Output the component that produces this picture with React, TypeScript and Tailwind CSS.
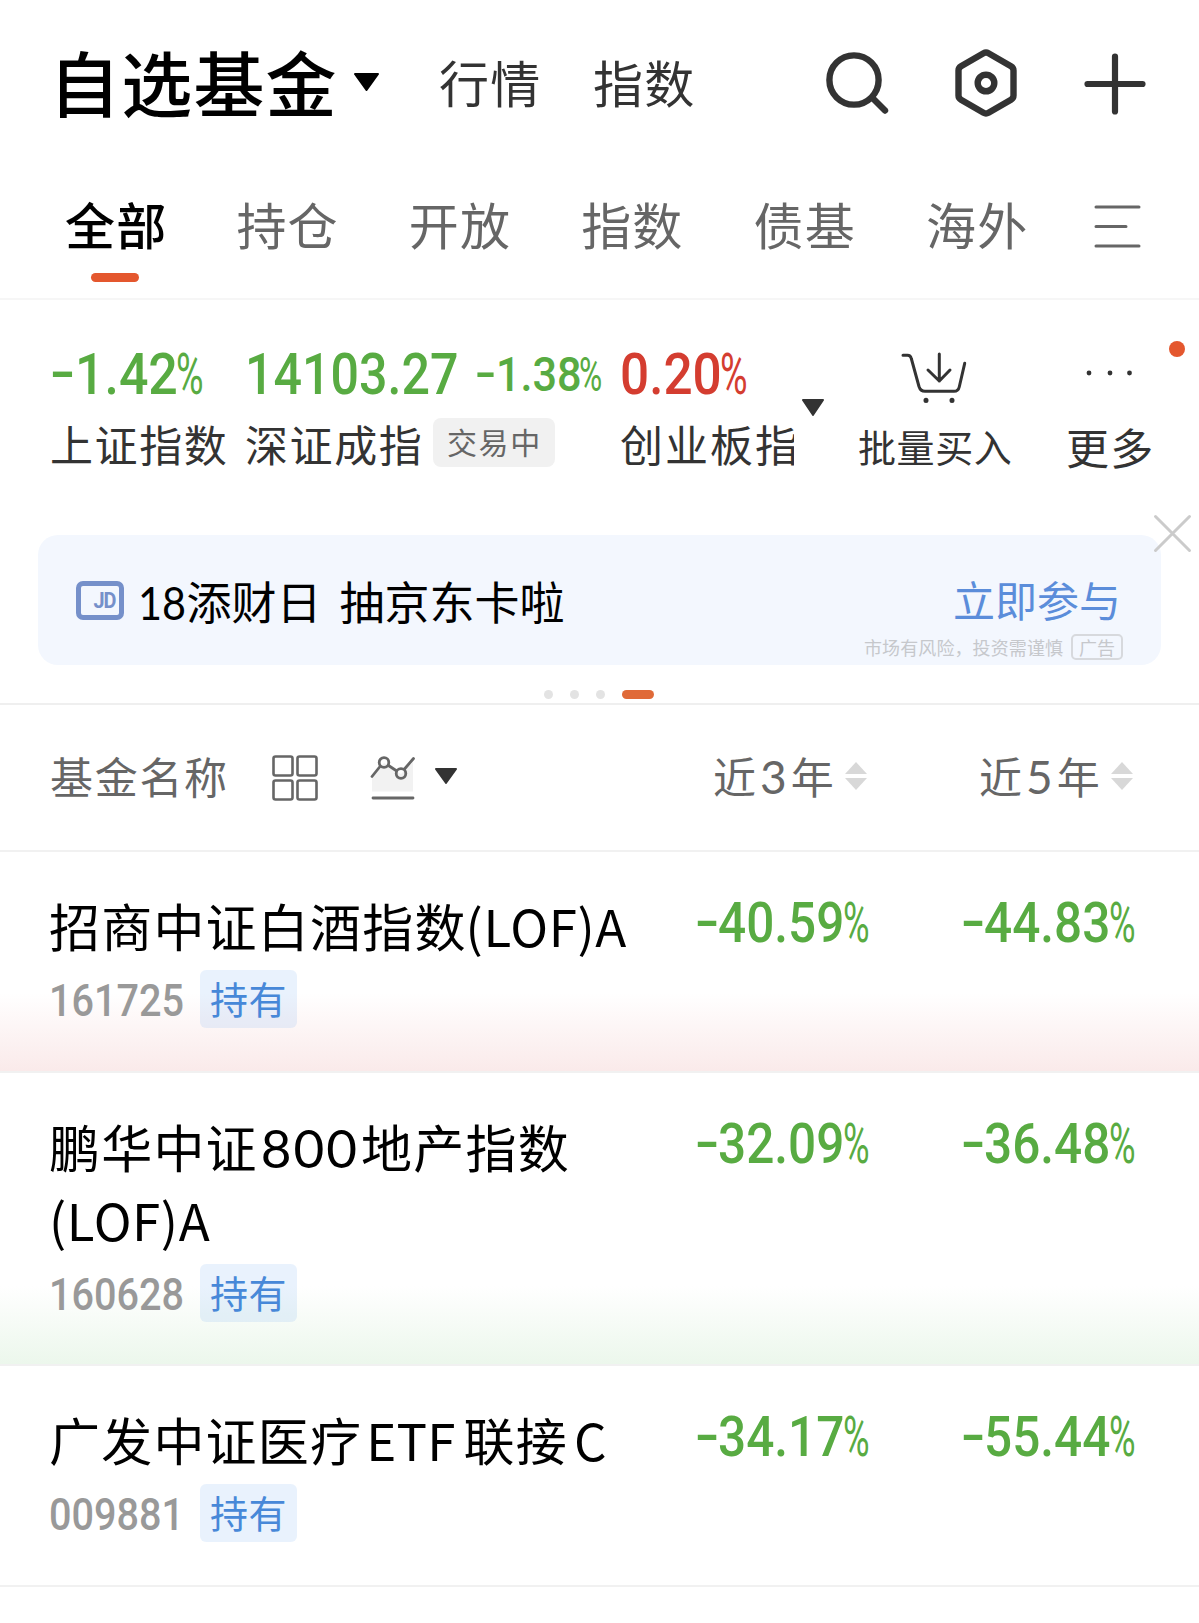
import type { ReactNode } from "react";

const GREEN = "text-[#58ab42]";
const RED = "text-[#d43d30]";

const TABS = ["全部", "持仓", "开放", "指数", "债基", "海外"];

const FUNDS = [
  {
    name: (
      <div>
        招商中证白酒指数<span className="-ml-px tracking-[0.6px]">(LOF)A</span>
      </div>
    ),
    code: "161725",
    year3: "40.59",
    year5: "44.83",
    glow: "from-[#faeaea]",
  },
  {
    name: (
      <>
        <div>
          鹏华中证<span className="mr-[2px] ml-[3px] font-[Lato] text-[53px] leading-none tracking-[2px]">800</span>地产指数
        </div>
        <div className="tracking-[0.6px]">(LOF)A</div>
      </>
    ),
    code: "160628",
    year3: "32.09",
    year5: "36.48",
    glow: "from-[#ecf7ec]",
  },
  {
    name: (
      <div>
        广发中证医疗<span className="mr-[8px] ml-[4px] tracking-[0.2px]">ETF</span>联接<span className="ml-[6px]">C</span>
      </div>
    ),
    code: "009881",
    year3: "34.17",
    year5: "55.44",
    glow: "",
  },
];

// Narrow figures: Roboto squeezed horizontally, with a thin percent sign
function Minus({ className }: { className: string }) {
  return <span className={`inline-block shrink-0 origin-left ${className}`}>-</span>;
}

function Squeeze({ className, children }: { className: string; children: ReactNode }) {
  return <span className={`inline-block shrink-0 origin-left whitespace-nowrap ${className}`}>{children}</span>;
}

function Rate({ value }: { value: string }) {
  return (
    <div className={`flex h-[56px] w-[172px] font-[Roboto] text-[55px] leading-[56px] font-medium ${GREEN}`}>
      <Minus className="-ml-px w-[23px] -translate-y-[2px] scale-x-[1.3]" />
      <Squeeze className="w-[125px] scale-x-[0.9]">{value}</Squeeze>
      <Squeeze className="w-[25px] scale-x-[0.66] font-normal">%</Squeeze>
    </div>
  );
}

function Caret({ className }: { className: string }) {
  return (
    <svg className={className} viewBox="0 0 24 18" preserveAspectRatio="none" fill="currentColor" stroke="currentColor" strokeWidth="2" strokeLinejoin="round">
      <path d="M1 1H23L12 17Z" />
    </svg>
  );
}

function SortArrows() {
  return (
    <svg className="-mt-[4px] h-[30px] w-[22px]" viewBox="0 0 22 30" fill="#d8d8d8">
      <path d="M11 1L22 13H0Z" />
      <path d="M11 29L22 17H0Z" />
    </svg>
  );
}

function Header() {
  return (
    <header className="flex h-[166px] items-center pl-[49px] text-[#333]">
      <h1 className="-mt-[6px] w-[305px] text-[71px] leading-none font-medium tracking-[1.2px] text-black">自选基金</h1>
      <Caret className="-mt-[2px] h-[18px] w-[25px] text-black" />
      <span className="-mt-[4px] ml-[60px] w-[154px] text-[50px] leading-none tracking-[1.2px]">行情</span>
      <span className="-mt-[4px] w-[231px] text-[50px] leading-none tracking-[1.2px]">指数</span>
      <svg className="h-[68px] w-[68px]" viewBox="0 0 68 68" fill="none" stroke="currentColor" strokeWidth="6.4" strokeLinecap="round">
        <circle cx="30" cy="31" r="24.6" />
        <path d="M49 49.500L61 61.500" />
      </svg>
      <svg className="ml-[62px] h-[70px] w-[64px]" viewBox="0 0 64 70" fill="none" stroke="currentColor" strokeWidth="6.4" strokeLinejoin="round">
        <path d="M29.500 5.200Q32 3.800 34.500 5.200L57 18.300Q59.500 19.800 59.500 22.500V47.500Q59.500 50.200 57 51.700L34.500 64.800Q32 66.200 29.500 64.800L7 51.700Q4.500 50.200 4.500 47.500V22.500Q4.500 19.800 7 18.300Z" />
        <circle cx="32" cy="35" r="8.300" />
      </svg>
      <svg className="mt-[2px] ml-[66px] h-[62px] w-[62px]" viewBox="0 0 62 62" fill="none" stroke="currentColor" strokeWidth="6.2" strokeLinecap="round">
        <path d="M3.500 31H58.500M31 3.500V58.500" />
      </svg>
    </header>
  );
}

function TabBar() {
  return (
    <nav className="flex h-[134px] items-start border-b-2 border-[#f6f6f6] pl-[65px] text-[#666]">
      {TABS.map((tab, index) => (
        <div key={tab} className="w-[172.4px] shrink-0 pt-[32px]">
          <div className={`-ml-px text-[50px] leading-[50px] tracking-[1.2px] ${index === 0 ? "ml-0 font-medium text-black" : ""}`}>{tab}</div>
          {index === 0 ? <div className="mt-[25px] ml-[26px] h-[9px] w-[48px] rounded-full bg-[#e4572e]" /> : null}
        </div>
      ))}
      <svg className="mt-[39px] -ml-[5px] h-[44px] w-[47px] shrink-0" viewBox="0 0 47 44" fill="none" stroke="currentColor" strokeWidth="3" strokeLinecap="round">
        <path d="M2 2H45M2 21.500H32M2 41H45" />
      </svg>
    </nav>
  );
}

function Indices() {
  return (
    <section className="relative flex h-[235px] pt-[43px] text-[#333]">
      <div className="ml-[50px] w-[195px]">
        <div className={`flex h-[62px] pt-px font-[Roboto] text-[57px] leading-[62px] font-medium ${GREEN}`}>
          <Minus className="w-[25px] -translate-y-[2px] scale-x-[1.3]" />
          <Squeeze className="w-[101px] scale-x-[0.91]">1.42</Squeeze>
          <Squeeze className="w-[26px] scale-x-[0.66] font-normal">%</Squeeze>
        </div>
        <div className="mt-[14px] text-[43px] leading-[48px] tracking-[1.6px] whitespace-nowrap">上证指数</div>
      </div>
      <div className="w-[375px]">
        <div className={`flex h-[62px] pt-px font-[Roboto] text-[57px] leading-[62px] font-medium ${GREEN}`}>
          <Squeeze className="w-[230px] scale-x-[0.88]">14103.27</Squeeze>
          <div className="flex text-[48px]">
            <Minus className="w-[21px] -translate-y-[2px] scale-x-[1.3]" />
            <Squeeze className="w-[83px] scale-x-[0.9]">1.38</Squeeze>
            <Squeeze className="w-[22px] scale-x-[0.66] font-normal">%</Squeeze>
          </div>
        </div>
        <div className="mt-[12px] flex items-center">
          <span className="w-[188px] pt-[2px] pb-px text-[43px] leading-[48px] tracking-[1.6px] whitespace-nowrap">深证成指</span>
          <span className="h-[49px] w-[122px] rounded-lg bg-[#f1f1f1] pl-[14px] text-[30px] leading-[46px] tracking-[1.6px] text-[#666]">交易中</span>
        </div>
      </div>
      <div className="w-[175px]">
        <div className={`flex h-[62px] pt-px font-[Roboto] text-[57px] leading-[62px] font-medium ${RED}`}>
          <Squeeze className="w-[100px] scale-x-[0.9]">0.20</Squeeze>
          <Squeeze className="w-[26px] scale-x-[0.66] font-normal">%</Squeeze>
        </div>
        <div className="mt-[14px] w-[174px] overflow-hidden text-[43px] leading-[48px] tracking-[2px] whitespace-nowrap">创业板指</div>
      </div>
      <Caret className="mt-[56px] ml-[7px] h-[17px] w-[22px]" />
      <div className="ml-[34px] w-[209px]">
        <svg className="mt-[8px] ml-[42px] h-[54px] w-[68px]" viewBox="0 0 68 54" fill="none" stroke="currentColor" strokeWidth="3" strokeLinecap="round" strokeLinejoin="round">
          <path d="M3 4.300H7.500Q10.500 4.300 11.300 7.500L19 35.500Q20.500 40.300 25 40.300H54Q58.300 40.300 59.300 35.700L64.700 12.300" />
          <path d="M39.300 3V30M28 19L39.300 30L50 19" />
          <path d="M26 49.300V49.400M52 49.300V49.400" strokeWidth="5" />
        </svg>
        <div className="mt-[17px] text-[38px] leading-[48px] tracking-[0.6px] whitespace-nowrap">批量买入</div>
      </div>
      <div>
        <svg className="mt-[26px] ml-[18px] h-[8px] w-[50px]" viewBox="0 0 50 8" fill="currentColor">
          <circle cx="4" cy="4" r="2.400" />
          <circle cx="25" cy="4" r="2.400" />
          <circle cx="44.500" cy="4" r="2.400" />
        </svg>
        <div className="mt-[45px] -ml-px text-[43px] leading-[48px] tracking-[1.2px] whitespace-nowrap">更多</div>
      </div>
      <span className="absolute top-[41px] left-[1169px] size-[16px] rounded-full bg-[#e4572e]" />
    </section>
  );
}

function Banner() {
  return (
    <section className="relative h-[170px] border-b-2 border-[#efefef] px-[38px]">
      <div className="flex h-[130px] rounded-[20px] bg-[#f3f7fe] pl-[38px]">
        <div className="mt-[46px] flex h-[39px] w-[48px] items-end justify-end rounded-[7px] border-[5px] border-[#7590ca] pr-[3px] pb-[2px] text-[22px] leading-[25px] font-bold tracking-[-1px] text-[#7590ca]">
          <span className="origin-right scale-x-[0.9] font-[Roboto]">JD</span>
        </div>
        <div className="mt-[39px] ml-[14px] text-[45px] leading-[54px] whitespace-pre">
          <Squeeze className="mr-[-5px] scale-x-[0.9] font-[Lato] text-[46px] leading-none">18</Squeeze>添财日<span className="ml-[18px]">抽京东卡啦</span>
        </div>
        <div className="ml-auto flex w-[300px] flex-col">
          <div className="mt-[37px] ml-[92px] text-[42px] leading-[54px] text-[#5b8dda]">立即参与</div>
          <div className="mt-[8px] ml-[3px] flex items-center text-[18px] leading-[26px] tracking-[0.1px] whitespace-nowrap text-[#c6c8cc]">
            <span className="w-[207px]">市场有风险，投资需谨慎</span>
            <span className="h-[26px] w-[52px] rounded-[5px] border-2 border-[#d7d9dd] text-center leading-[22px]">广告</span>
          </div>
        </div>
      </div>
      <div className="mt-[25px] ml-[506px] flex h-[9px] gap-[17px]">
        <i className="size-[9px] rounded-full bg-[#e3e3e3]" />
        <i className="size-[9px] rounded-full bg-[#e3e3e3]" />
        <i className="size-[9px] rounded-full bg-[#e3e3e3]" />
        <i className="h-[9px] w-[32px] rounded-full bg-[#e06a38]" />
      </div>
      <svg className="absolute -top-[21px] left-[1153px] size-[39px]" viewBox="0 0 39 39" fill="none" stroke="#cbcbcb" strokeWidth="3" strokeLinecap="round">
        <path d="M2.500 2.500L36.500 36.500M36.500 2.500L2.500 36.500" />
      </svg>
    </section>
  );
}

function TableHead() {
  return (
    <div className="flex h-[147px] items-center border-b-2 border-[#f1f1f1] pl-[50px] text-[43px] leading-[50px] whitespace-nowrap text-[#666]">
      <span className="-mt-[5px] w-[222px] tracking-[1.7px]">基金名称</span>
      <svg className="h-[46px] w-[46px]" viewBox="0 0 46 46" fill="none" stroke="currentColor" strokeWidth="2.600">
        <rect x="1.500" y="1.500" width="19" height="19" rx="2" />
        <rect x="25.500" y="1.500" width="19" height="19" rx="2" />
        <rect x="1.500" y="25.500" width="19" height="19" rx="2" />
        <rect x="25.500" y="25.500" width="19" height="19" rx="2" />
      </svg>
      <svg className="mt-[3px] ml-[52px] h-[46px] w-[45px]" viewBox="0 0 45 46" fill="none" stroke="currentColor" strokeWidth="2.800" strokeLinecap="round">
        <path d="M2 21L14 7L31 18L43 6V35.500H2Z" fill="#f2f2f2" stroke="none" />
        <path d="M2 20.500L10 10.500M18.500 9.500L26 14.500M34.500 13L43.500 2.500M3 42H43" />
        <circle cx="14" cy="6.500" r="4.800" />
        <circle cx="31" cy="17.500" r="4.800" />
      </svg>
      <Caret className="-mt-[4px] ml-[20px] h-[16px] w-[22px] text-[#333]" />
      <span className="-mt-[5px] ml-[256px] w-[132px] tracking-[2px]">
        近<span className="mx-[2px] font-[Lato] text-[46px] leading-none">3</span>年
      </span>
      <SortArrows />
      <span className="-mt-[5px] ml-[112px] w-[132px] tracking-[2px]">
        近<span className="mx-[2px] font-[Lato] text-[46px] leading-none">5</span>年
      </span>
      <SortArrows />
    </div>
  );
}

export default function App() {
  return (
    <main className="h-[1623px] w-[1199px] overflow-hidden bg-white font-['Noto_Sans_CJK_SC',sans-serif]">
      <Header />
      <TabBar />
      <Indices />
      <Banner />
      <TableHead />
      {FUNDS.map((fund) => (
        <article
          key={fund.code}
          className={`flex border-b-2 border-[#f1f1f1] bg-linear-to-t to-white to-[78px] pt-[37px] pb-[42.500px] pl-[49px] ${fund.glow}`}
        >
          <div className="w-[647px]">
            <h2 className="text-[51px] leading-[73px] tracking-[1.2px] whitespace-nowrap text-black">{fund.name}</h2>
            <div className="mt-[8px] flex h-[58px] items-center">
              <span className="w-[151px] pt-[4px] font-[Roboto] text-[45px] leading-[58px] text-[#999]">
                <Squeeze className="scale-x-[0.88] font-medium">{fund.code}</Squeeze>
              </span>
              <span className="h-[58px] w-[97px] rounded-md bg-[#4a96ee]/12 pl-[10px] text-[38px] leading-[56px] tracking-[0.400px] text-[#4788d8]">持有</span>
            </div>
          </div>
          <div className="mt-[6px] flex gap-[94px]">
            <Rate value={fund.year3} />
            <Rate value={fund.year5} />
          </div>
        </article>
      ))}
    </main>
  );
}
